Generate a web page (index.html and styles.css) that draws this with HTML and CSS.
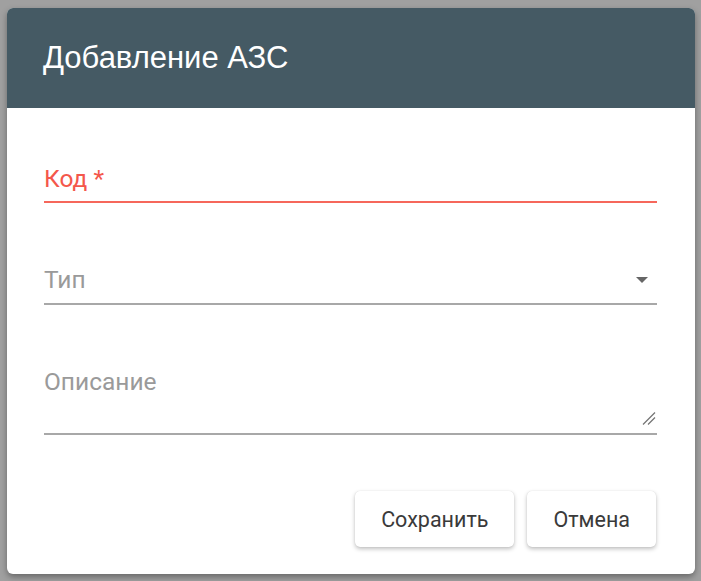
FILE: index.html
```html
<!DOCTYPE html>
<html lang="ru">
<head>
<meta charset="utf-8">
<title>Добавление АЗС</title>
<link rel="stylesheet" href="styles.css">
</head>
<body>
<div class="dialog">
  <div class="dialog-header">
    <h1 class="dialog-title">Добавление АЗС</h1>
  </div>
  <div class="dialog-body">
    <div class="field field-error">
      <span class="field-label">Код *</span>
    </div>
    <div class="field field-select">
      <span class="field-label">Тип</span>
      <svg class="select-arrow" width="12" height="6" viewBox="0 0 12 6"><path d="M0 0 L12 0 L6 6 Z" fill="#666"/></svg>
    </div>
    <div class="field field-textarea">
      <span class="field-label">Описание</span>
      <svg class="resize-grip" width="14" height="13" viewBox="0 0 14 13"><path d="M1 12.5 L13 0.5 M6 12.5 L13 5.5" stroke="#777" stroke-width="1.3" fill="none"/></svg>
    </div>
    <div class="actions">
      <button class="btn">Сохранить</button>
      <button class="btn">Отмена</button>
    </div>
  </div>
</div>
</body>
</html>
```
FILE: styles.css
```css
html, body {
  margin: 0;
  padding: 0;
}
body {
  background: #a0a0a0;
  height: 581px;
  overflow: hidden;
  font-family: Roboto, "Liberation Sans", Arial, sans-serif;
  padding: 8px 0 0 7px;
  box-sizing: border-box;
}
.dialog {
  width: 688px;
  height: 566px;
  background: #fff;
  border-radius: 6px;
  overflow: hidden;
  box-shadow: 0 3px 6px rgba(0, 0, 0, 0.35);
  display: flex;
  flex-direction: column;
}
.dialog-header {
  height: 100px;
  background: #455a64;
  display: flex;
  align-items: center;
  padding-left: 36px;
  flex-shrink: 0;
}
.dialog-title {
  margin: 0;
  color: #fff;
  font-family: "Liberation Sans", Arial, sans-serif;
  font-size: 31px;
  font-weight: 400;
  line-height: 36px;
}
.dialog-body {
  padding: 57px 38px 27px 37px;
  display: flex;
  flex-direction: column;
}
.field {
  border-bottom: 2px solid #a8a8a8;
  display: flex;
  align-items: center;
}
.field-label {
  font-size: 24.5px;
  line-height: 28px;
  color: #9a9a9a;
  flex: 1;
}
.field-error {
  border-bottom-color: #f6675b;
  padding-bottom: 8px;
}
.field-error .field-label {
  color: #f4574b;
}
.field-select {
  margin-top: 63px;
  padding-bottom: 9px;
}
.select-arrow {
  margin-right: 9px;
}
.field-textarea {
  margin-top: 63px;
  padding-bottom: 37px;
  position: relative;
}
.resize-grip {
  position: absolute;
  right: 1px;
  bottom: 8px;
}
.actions {
  margin-top: 56px;
  display: flex;
  justify-content: flex-end;
  gap: 13px;
  margin-right: 1px;
}
.btn {
  height: 56px;
  padding: 0 26px;
  background: #fff;
  border: none;
  border-radius: 5px;
  box-shadow: 0 2px 4px rgba(0, 0, 0, 0.25), 0 0 1px rgba(0, 0, 0, 0.15);
  font-family: Roboto, "Liberation Sans", Arial, sans-serif;
  font-size: 21.5px;
  color: #3a3a3a;
}
```
